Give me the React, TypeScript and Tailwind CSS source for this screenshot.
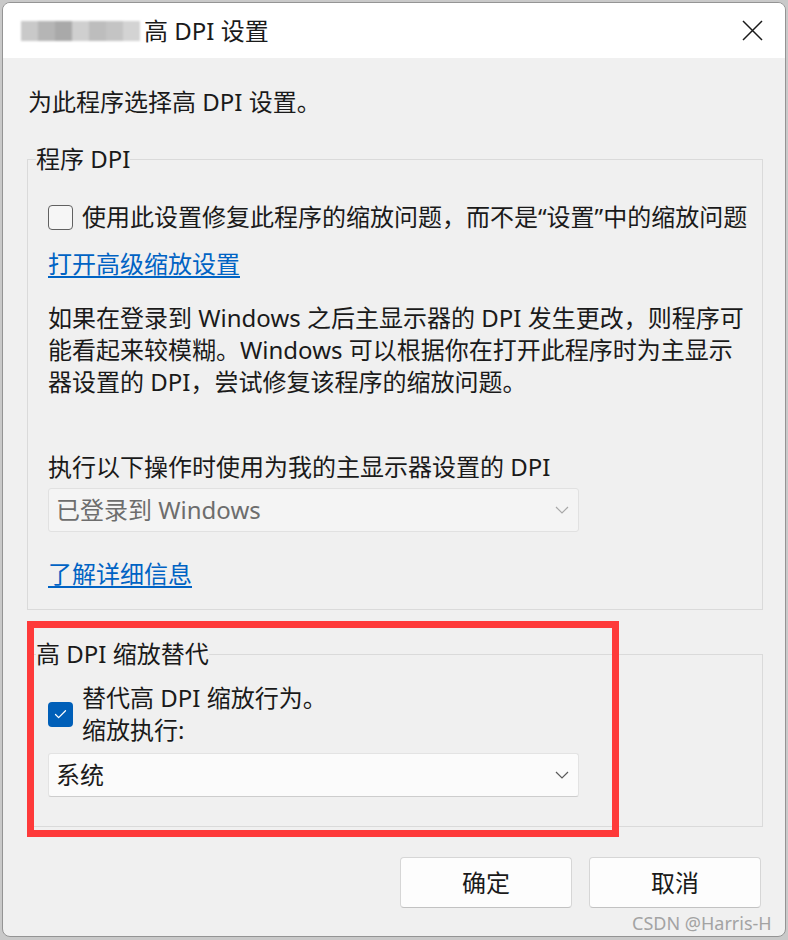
import { Check } from 'lucide-react';

function Chevron({ color }: { color: string }) {
  return (
    <svg width="14" height="8" viewBox="0 0 14 8" fill="none">
      <path d="M1 1L7 7L13 1" stroke={color} strokeWidth="1.2" />
    </svg>
  );
}

function Select({ value, disabled }: { value: string; disabled?: boolean }) {
  return (
    <div
      className={`flex items-center justify-between w-[531px] h-[44px] pl-[7px] pr-[9px] rounded-[3px] border ${
        disabled
          ? 'bg-[#f4f4f4] border-[#e1e1e1] text-[#6d6d6d]'
          : 'bg-[#fbfbfb] border-[#e3e3e3] border-b-[#cdcdcd] text-[#1a1a1a]'
      }`}
    >
      <span className="leading-[32px]">{value}</span>
      <Chevron color={disabled ? '#a8a8a8' : '#5a5a5a'} />
    </div>
  );
}

function Button({ label }: { label: string }) {
  return (
    <button className="w-[172px] h-[51px] rounded-[4px] border border-[#d6d6d6] border-b-[#c2c2c2] bg-[#fdfdfd] leading-[32px]">
      {label}
    </button>
  );
}

export default function App() {
  // blurred program name in the title
  const blur = ['#c9c9c9', '#b5b5b5', '#a9a9a9', '#cfcfcf', '#bdbdbd', '#c4c4c4', '#d3d3d3'];

  return (
    <div className="relative w-[788px] h-[940px] overflow-hidden bg-[#c9c9c9] pt-[2px] pl-[2px] text-[24px] text-[#1a1a1a] [font-family:'Noto_Sans','Noto_Sans_CJK_SC',sans-serif]">
      <div className="flex flex-col w-[784px] h-[935px] rounded-[8px] border border-[#949494] overflow-hidden bg-[#f0f0f0]">
        {/* title bar */}
        <div className="flex items-center justify-between h-[55px] bg-white pr-[22px]">
          <div className="flex items-center">
            <div className="flex ml-[18px] mr-[4px] blur-[1px]">
              {blur.map((c, i) => (
                <div key={i} className="w-[17px] h-[20px]" style={{ backgroundColor: c }} />
              ))}
            </div>
            <span className="leading-[32px]">高 DPI 设置</span>
          </div>
          <svg width="21" height="21" viewBox="0 0 21 21" fill="none">
            <path d="M1 1L20 20M20 1L1 20" stroke="#1a1a1a" strokeWidth="1.5" />
          </svg>
        </div>

        {/* body */}
        <div className="flex flex-col">
          <p className="mt-[28px] pl-[25px] leading-[32px]">为此程序选择高 DPI 设置。</p>

          <fieldset className="ml-[24px] mt-[25px] w-[736px] border border-[#dadada] px-[8px] pb-[19px]">
            <legend className="leading-[32px] p-0">程序 DPI</legend>
            <div className="flex flex-col items-start pl-[12px]">
              <div className="mt-[26px] flex items-center gap-[9px] h-[32px]">
                <div className="w-[25px] h-[25px] rounded-[4px] border-[1.5px] border-[#616161] bg-[#f6f6f6]" />
                <span className="whitespace-nowrap">使用此设置修复此程序的缩放问题，而不是“设置”中的缩放问题</span>
              </div>
              <a className="mt-[15px] leading-[32px] text-[#0063c4] underline underline-offset-[3px]">打开高级缩放设置</a>
              <p className="mt-[22px] leading-[32px] whitespace-nowrap">
                如果在登录到 Windows 之后主显示器的 DPI 发生更改，则程序可
                <br />
                能看起来较模糊。Windows 可以根据你在打开此程序时为主显示
                <br />
                器设置的 DPI，尝试修复该程序的缩放问题。
              </p>
              <p className="mt-[53px] leading-[32px]">执行以下操作时使用为我的主显示器设置的 DPI</p>
              <div className="mt-[5px]">
                <Select value="已登录到 Windows" disabled />
              </div>
              <a className="mt-[26px] leading-[32px] text-[#0063c4] underline underline-offset-[3px]">了解详细信息</a>
            </div>
          </fieldset>

          <fieldset className="ml-[24px] mt-[28px] w-[736px] border border-[#dadada] px-[8px] pb-[29px]">
            <legend className="leading-[32px] p-0">高 DPI 缩放替代</legend>
            <div className="flex flex-col items-start pl-[12px]">
              <div className="mt-[12px] flex items-center gap-[9px]">
                <div className="flex items-center justify-center w-[25px] h-[25px] rounded-[4px] bg-[#005fb8]">
                  <Check className="w-[15px] h-[15px] text-white" strokeWidth={2} />
                </div>
                <div className="flex flex-col leading-[32px]">
                  <span>替代高 DPI 缩放行为。</span>
                  <span>缩放执行:</span>
                </div>
              </div>
              <div className="mt-[7px]">
                <Select value="系统" />
              </div>
            </div>
          </fieldset>

          <div className="mt-[30px] flex justify-end gap-[17px] pr-[24px]">
            <Button label="确定" />
            <Button label="取消" />
          </div>
        </div>
      </div>

      {/* red annotation box */}
      <div className="absolute left-[27px] top-[621px] w-[592px] h-[216px] border-[7px] border-[#fe3a3a]" />

      {/* watermark */}
      <div className="absolute left-[632px] top-[910px] text-[18px] leading-[26px] text-[#a3a3a3] whitespace-nowrap">
        CSDN @Harris-H
      </div>
    </div>
  );
}
